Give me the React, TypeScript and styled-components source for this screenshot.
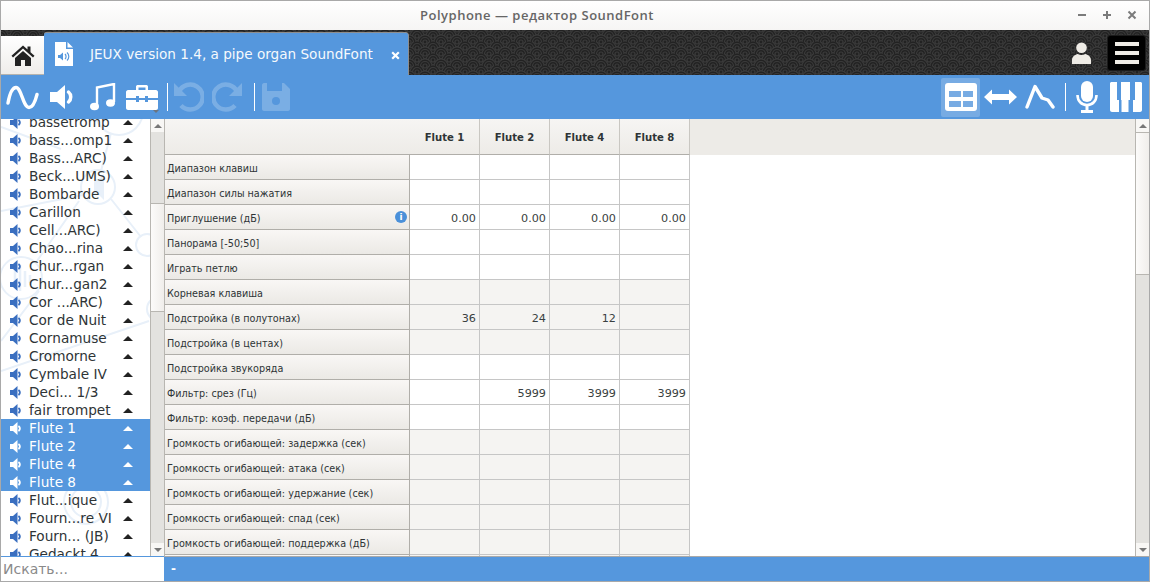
import React from "react"
import styled, { createGlobalStyle } from "styled-components"

const BLUE = "#5597dd"

const presets = [
  "bassetromp", "bass...omp1", "Bass...ARC)", "Beck...UMS)", "Bombarde", "Carillon",
  "Cell...ARC)", "Chao...rina", "Chur...rgan", "Chur...gan2", "Cor ...ARC)", "Cor de Nuit",
  "Cornamuse", "Cromorne", "Cymbale IV", "Deci... 1/3", "fair trompet", "Flute 1",
  "Flute 2", "Flute 4", "Flute 8", "Flut...ique", "Fourn...re VI", "Fourn... (JB)", "Gedackt 4",
]

const selected = ["Flute 1", "Flute 2", "Flute 4", "Flute 8"]

const columns = ["Flute 1", "Flute 2", "Flute 4", "Flute 8"]

type Row = { label: string; shaded?: boolean; info?: boolean; values?: string[] }

const rows: Row[] = [
  { label: "Диапазон клавиш" },
  { label: "Диапазон силы нажатия" },
  { label: "Приглушение (дБ)", info: true, values: ["0.00", "0.00", "0.00", "0.00"] },
  { label: "Панорама [-50;50]" },
  { label: "Играть петлю" },
  { label: "Корневая клавиша", shaded: true },
  { label: "Подстройка (в полутонах)", shaded: true, values: ["36", "24", "12", ""] },
  { label: "Подстройка (в центах)", shaded: true },
  { label: "Подстройка звукоряда" },
  { label: "Фильтр: срез (Гц)", values: ["", "5999", "3999", "3999"] },
  { label: "Фильтр: коэф. передачи (дБ)" },
  { label: "Громкость огибающей: задержка (сек)", shaded: true },
  { label: "Громкость огибающей: атака (сек)", shaded: true },
  { label: "Громкость огибающей: удержание (сек)", shaded: true },
  { label: "Громкость огибающей: спад (сек)", shaded: true },
  { label: "Громкость огибающей: поддержка (дБ)", shaded: true },
  { label: "", shaded: true },
]

const Global = createGlobalStyle`
  html, body {
    margin: 0;
    padding: 0;
    height: 100%;
    overflow: hidden;
    background: #fff;
  }
  #root {
    height: 100%;
  }
`

const Window = styled.div`
  width: 1150px;
  height: 582px;
  box-sizing: border-box;
  border: 1px solid #a9a9a9;
  display: flex;
  flex-direction: column;
  font-family: "DejaVu Sans", sans-serif;
  overflow: hidden;
`

const TitleBar = styled.div`
  height: 29px;
  flex: none;
  position: relative;
  display: flex;
  align-items: center;
  justify-content: center;
  background: linear-gradient(#ffffff, #f6f5f4);
  font-family: "Open Sans", sans-serif;
  font-weight: 600;
  font-size: 13px;
  letter-spacing: 0.5px;
  color: #666;
  padding: 0 76px 2px 0;
  box-sizing: border-box;
`

const WindowButtons = styled.div`
  position: absolute;
  right: 12px;
  top: 7px;
  display: flex;
  gap: 15px;
`

const TabBand = styled.div`
  height: 45px;
  flex: none;
  position: relative;
  background: #222;
  display: flex;
  align-items: flex-end;
`

const BandPattern = styled.svg`
  position: absolute;
  inset: 0;
  width: 100%;
  height: 100%;
`

const HomeTab = styled.div`
  position: relative;
  width: 43px;
  height: 39px;
  background: linear-gradient(#fff, #efedea);
  border-bottom: 1px solid #b5b3ae;
  box-sizing: border-box;
  display: flex;
  align-items: center;
  justify-content: center;
`

const ActiveTab = styled.div`
  position: relative;
  width: 364px;
  height: 42px;
  background: ${BLUE};
  border-radius: 2px 2px 0 0;
  box-shadow: 1px 0 0 #8d8d8d, 0 -1px 0 #8d8d8d;
  display: flex;
  align-items: center;
  color: #fff;
  font-size: 13.6px;
  padding-left: 11px;
  box-sizing: border-box;
`

const TabTitle = styled.span`
  margin-left: 17px;
  white-space: nowrap;
  opacity: 0.95;
`

const TabClose = styled.svg`
  position: absolute;
  right: 8px;
  top: 18px;
`

const BandRight = styled.div`
  position: absolute;
  right: 3px;
  top: 5px;
  display: flex;
  align-items: center;
  gap: 16px;
`

const MenuButton = styled.div`
  width: 39px;
  height: 36px;
  box-sizing: border-box;
  background: #000;
  border: 1px solid #1b1b1b;
  border-radius: 3px;
  box-shadow: inset 0 0 0 1px #000;
  display: flex;
  flex-direction: column;
  justify-content: center;
  align-items: center;
  gap: 5px;
`

const MenuLine = styled.span`
  display: block;
  width: 24px;
  height: 4px;
  background: #efece6;
`

const Toolbar = styled.div`
  height: 44px;
  flex: none;
  background: ${BLUE};
  display: flex;
  align-items: center;
  padding-left: 4px;
`

const ToolGroup = styled.div`
  display: flex;
  align-items: center;
`

const ToolIcon = styled.div<{ $w: number; $dim?: boolean; $active?: boolean }>`
  position: relative;
  width: ${(p) => p.$w}px;
  height: 39px;
  display: flex;
  align-items: center;
  justify-content: center;
  background: ${(p) => (p.$active ? "rgba(255,255,255,0.2)" : "transparent")};
  border-radius: 2px;
  & > svg {
    opacity: ${(p) => (p.$dim ? 0.22 : 1)};
  }
`

const MenuHint = styled.span`
  position: absolute;
  right: 5px;
  bottom: 4px;
  width: 0;
  height: 0;
  border-left: 3px solid transparent;
  border-right: 3px solid transparent;
  border-top: 3px solid #6b7480;
`

const ToolSep = styled.div<{ $gap: number }>`
  width: 1px;
  height: 28px;
  background: #fff;
  margin: 0 ${(p) => p.$gap}px;
`

const Spacer = styled.div`
  flex: 1;
`

const Main = styled.div`
  flex: 1;
  min-height: 0;
  display: flex;
`

const Sidebar = styled.div`
  width: 149px;
  flex: none;
  position: relative;
  overflow: hidden;
  background: #fff;
`

const Watermark = styled.svg`
  position: absolute;
  left: 0;
  top: 0;
`

const PresetList = styled.ul`
  list-style: none;
  position: relative;
  margin: -6px 0 0;
  padding: 0;
`

const Preset = styled.li<{ $selected: boolean }>`
  height: 18px;
  display: flex;
  align-items: center;
  padding-left: 8px;
  font-size: 13.65px;
  color: ${(p) => (p.$selected ? "#fff" : "#2e3436")};
  background: ${(p) => (p.$selected ? BLUE : "transparent")};
`

const PresetName = styled.span`
  flex: 1;
  margin-left: 7px;
  white-space: nowrap;
`

const Caret = styled.span<{ $light: boolean }>`
  width: 0;
  height: 0;
  margin-right: 17px;
  border-left: 5px solid transparent;
  border-right: 5px solid transparent;
  border-bottom: 5px solid ${(p) => (p.$light ? "#fff" : "#222")};
`

const Scrollbar = styled.div`
  flex: none;
  width: 14px;
  box-sizing: border-box;
  display: flex;
  flex-direction: column;
  background: #e3e2df;
  border-left: 1px solid #b8b6b1;
`

const ScrollEnd = styled.div<{ $down?: boolean }>`
  height: 13px;
  flex: none;
  background: #f8f7f5;
  display: flex;
  align-items: center;
  justify-content: center;
  &::after {
    content: "";
    width: 0;
    height: 0;
    border-left: 4px solid transparent;
    border-right: 4px solid transparent;
    ${(p) => (p.$down ? "border-top" : "border-bottom")}: 4px solid #777;
  }
`

const ScrollThumb = styled.div<{ $h: number; $offset?: number }>`
  height: ${(p) => p.$h}px;
  margin-top: ${(p) => p.$offset ?? 0}px;
  flex: none;
  box-sizing: border-box;
  background: linear-gradient(90deg, #fcfbfa, #f0eeeb);
  border-top: 1px solid #b8b6b1;
  border-bottom: 1px solid #b8b6b1;
`

const ScrollFill = styled.div`
  flex: 1;
`

const TableArea = styled.div`
  flex: 1;
  min-width: 0;
  overflow: hidden;
  background: #fff;
  border-left: 1px solid #b8b6b1;
`

const HeaderRow = styled.div`
  height: 36px;
  display: flex;
  background: linear-gradient(#f6f5f3, #edebe7);
`

const Corner = styled.div`
  width: 245px;
  box-sizing: border-box;
  border-bottom: 1px solid #b0aea9;
`

const ColHead = styled.div`
  width: 70px;
  box-sizing: border-box;
  border-right: 1px solid #c9c7c2;
  border-bottom: 1px solid #b0aea9;
  display: flex;
  align-items: center;
  justify-content: center;
  font-size: 10.1px;
  font-weight: bold;
  color: #2e3436;
  padding-top: 1px;
`

const HeaderRest = styled.div`
  flex: 1;
  background: #edebe7;
`

const TableRow = styled.div`
  height: 25px;
  display: flex;
`

const RowHead = styled.div`
  width: 245px;
  box-sizing: border-box;
  background: linear-gradient(#f9f7f5, #ebe9e5);
  border-right: 1px solid #b0aea9;
  border-bottom: 1px solid #b0aea9;
  display: flex;
  align-items: center;
  justify-content: space-between;
  padding: 2px 2px 0 2px;
  font-size: 9.65px;
  color: #2e3436;
`

const InfoDot = styled.span`
  width: 12px;
  height: 12px;
  border-radius: 50%;
  background: #4a90d9;
  color: #fff;
  font-size: 9px;
  font-weight: bold;
  line-height: 12px;
  text-align: center;
  margin-bottom: 3px;
`

const Cell = styled.div<{ $shaded?: boolean }>`
  width: 70px;
  box-sizing: border-box;
  background: ${(p) => (p.$shaded ? "#f5f4f2" : "#fff")};
  border-right: 1px solid #c6c6c6;
  border-bottom: 1px solid #c6c6c6;
  display: flex;
  align-items: center;
  justify-content: flex-end;
  padding: 2px 3px 0 0;
  font-size: 11.2px;
  color: #3a3f41;
`

const BottomBar = styled.div`
  height: 24px;
  flex: none;
  display: flex;
  border-top: 1px solid ${BLUE};
`

const Search = styled.div`
  width: 163px;
  flex: none;
  background: #fff;
  display: flex;
  align-items: center;
  padding-left: 2px;
  box-sizing: border-box;
  font-size: 14px;
  color: #8a8a8a;
`

const Status = styled.div`
  flex: 1;
  background: ${BLUE};
  box-shadow: 0 -1px 0 #a9a9a9;
  color: #fff;
  font-size: 12px;
  font-weight: bold;
  display: flex;
  align-items: center;
  padding-left: 7px;
`

const Speaker = ({ color }: { color: string }) => (
  <svg width="13" height="13" viewBox="0 0 13 13">
    <path d="M1 4h3l4.500-4v13L4 9H1z" fill={color} />
    <path d="M10 4.500c1.200 1.200 1.200 2.800 0 4" fill="none" stroke={color} strokeWidth="1.800" strokeLinecap="round" />
  </svg>
)

const App = () => {
  return (
    <Window>
      <Global />
      <TitleBar>
        Polyphone — редактор SoundFont
        <WindowButtons>
          <svg width="10" height="14" viewBox="0 0 10 14">
            <rect x="1" y="6" width="8" height="2" fill="#7b7b7b" />
          </svg>
          <svg width="10" height="14" viewBox="0 0 10 14">
            <path d="M1 7h8M5 3v8" stroke="#7b7b7b" strokeWidth="2" />
          </svg>
          <svg width="10" height="14" viewBox="0 0 10 14">
            <path d="M1.500 3.500l7 7M8.500 3.500l-7 7" stroke="#7b7b7b" strokeWidth="2" />
          </svg>
        </WindowButtons>
      </TitleBar>
      <TabBand>
        <BandPattern>
          <defs>
            <pattern id="scales" width="16" height="12" patternUnits="userSpaceOnUse">
              <g fill="#222" stroke="#3a3a3a" strokeWidth="1.200">
                <circle cx="0" cy="-6" r="7" />
                <circle cx="16" cy="-6" r="7" />
                <circle cx="8" cy="0" r="7" />
                <circle cx="8" cy="0" r="4.500" />
                <circle cx="8" cy="0" r="2" />
                <circle cx="0" cy="6" r="7" />
                <circle cx="0" cy="6" r="4.500" />
                <circle cx="0" cy="6" r="2" />
                <circle cx="16" cy="6" r="7" />
                <circle cx="16" cy="6" r="4.500" />
                <circle cx="16" cy="6" r="2" />
                <circle cx="8" cy="12" r="7" />
                <circle cx="8" cy="12" r="4.500" />
                <circle cx="8" cy="12" r="2" />
              </g>
            </pattern>
          </defs>
          <rect width="100%" height="100%" fill="url(#scales)" />
        </BandPattern>
        <HomeTab>
          <svg width="24" height="21" viewBox="0 0 24 21">
            <path d="M12 0.500L0.500 10.800l1.500 1.600L12 3.600l10 8.800 1.500-1.600-4-3.600V1.500h-3v3z" fill="#222" />
            <path d="M4 13l8-7 8 7v8h-6v-6h-4v6H4z" fill="#222" />
          </svg>
        </HomeTab>
        <ActiveTab>
          <svg width="18" height="24" viewBox="0 0 18 24">
            <path d="M0 0h11v7h7v17H0z" fill="#fff" />
            <path d="M12.500 0l5.500 5.500h-5.500z" fill="#fff" />
            <path d="M3 13h2l3-2.500v8L5 16H3z" fill={BLUE} />
            <path d="M10 12c1.400 1.300 1.400 3.700 0 5M12 10.500c2.400 2.200 2.400 5.800 0 8" fill="none" stroke={BLUE} strokeWidth="1.200" />
          </svg>
          <TabTitle>JEUX version 1.4, a pipe organ SoundFont</TabTitle>
          <TabClose width="9" height="9" viewBox="0 0 9 9">
            <path d="M1.200 1.200l6.600 6.600M7.800 1.200L1.200 7.800" stroke="#fff" strokeWidth="2.200" />
          </TabClose>
        </ActiveTab>
        <BandRight>
          <svg width="19" height="22" viewBox="0 0 20 23">
            <circle cx="10" cy="6" r="5.600" fill="#efece6" />
            <path d="M0 23v-4c0-4 3.500-6 6-6.500 2.400 1.400 5.600 1.400 8 0 2.500.5 6 2.500 6 6.500v4z" fill="#efece6" />
          </svg>
          <MenuButton>
            <MenuLine />
            <MenuLine />
            <MenuLine />
          </MenuButton>
        </BandRight>
      </TabBand>
      <Toolbar>
        <ToolGroup>
          <ToolIcon $w={34}>
            <svg width="33" height="27" viewBox="0 0 33 27">
              <path d="M2 19C4 8 7 3.500 10 3.500c5.500 0 7 20 13 20 3.500 0 6-5 8-13" fill="none" stroke="#fff" strokeWidth="3.400" strokeLinecap="round" />
            </svg>
          </ToolIcon>
          <ToolIcon $w={46}>
            <svg width="25" height="26" viewBox="0 0 25 26">
              <path d="M0 8h7l8-7v24l-8-7H0z" fill="#fff" />
              <path d="M18.500 8c3 2.500 3 7.500 0 10" fill="none" stroke="#fff" strokeWidth="3.500" strokeLinecap="round" />
            </svg>
          </ToolIcon>
          <ToolIcon $w={35}>
            <svg width="26" height="28" viewBox="0 0 26 28">
              <path d="M7 23V4.500L24 1v18" fill="none" stroke="#fff" strokeWidth="2.400" />
              <ellipse cx="4.500" cy="23.500" rx="4.500" ry="3.700" fill="#fff" />
              <ellipse cx="20.500" cy="20" rx="4.500" ry="3.700" fill="#fff" />
            </svg>
          </ToolIcon>
          <ToolIcon $w={44}>
            <svg width="32" height="26" viewBox="0 0 32 26">
              <path d="M10 6V2.500C10 1.500 11 1 12 1h8c1 0 2 .5 2 1.500V6h-2.500V3.500h-7V6z" fill="#fff" />
              <path d="M2 6h28c1 0 2 1 2 2v6H22v-2h-3v2h-6v-2h-3v2H0V8c0-1 1-2 2-2z" fill="#fff" />
              <path d="M0 16h10v2h3v-2h6v2h3v-2h10v8c0 1-1 2-2 2H2c-1 0-2-1-2-2z" fill="#fff" />
            </svg>
            <MenuHint />
          </ToolIcon>
          <ToolSep $gap={3} />
          <ToolIcon $w={33} $dim>
            <svg width="32" height="30" viewBox="0 0 32 30">
              <path d="M7 9.500a12.500 12.500 0 1 1 2 14" fill="none" stroke="#fff" strokeWidth="4.500" />
              <path d="M2 1v13h13z" fill="#fff" />
            </svg>
          </ToolIcon>
          <ToolIcon $w={47} $dim>
            <svg width="32" height="30" viewBox="0 0 32 30">
              <path d="M25 9.500a12.500 12.500 0 1 0-2 14" fill="none" stroke="#fff" strokeWidth="4.500" />
              <path d="M30 1v13H17z" fill="#fff" />
            </svg>
          </ToolIcon>
          <ToolSep $gap={3} />
          <ToolIcon $w={36} $dim>
            <svg width="28" height="28" viewBox="0 0 28 28">
              <path d="M2 0h20l6 6v20c0 1-1 2-2 2H2c-1 0-2-1-2-2V2C0 1 1 0 2 0z" fill="#fff" />
              <rect x="5" y="0" width="15" height="8" fill={BLUE} />
              <circle cx="14" cy="18" r="4" fill={BLUE} />
            </svg>
          </ToolIcon>
        </ToolGroup>
        <Spacer />
        <ToolGroup>
          <ToolIcon $w={39} $active>
            <svg width="32" height="28" viewBox="0 0 32 28">
              <path d="M3 0h26c2 0 3 1 3 3v22c0 2-1 3-3 3H3c-2 0-3-1-3-3V3c0-2 1-3 3-3zM4 8v6h12V8zm14 0v6h10V8zM4 18v6h12v-6zm14 0v6h10v-6z" fill="#fff" fillRule="evenodd" />
            </svg>
          </ToolIcon>
          <ToolIcon $w={40}>
            <svg width="33" height="16" viewBox="0 0 33 16">
              <path d="M0 8l8-7.500V5h17V.5L33 8l-8 7.500V11H8v4.500z" fill="#fff" />
            </svg>
          </ToolIcon>
          <ToolIcon $w={40}>
            <svg width="30" height="28" viewBox="0 0 30 28">
              <path d="M2 24L10 3.500 17 15l6 2 5 7" fill="none" stroke="#fff" strokeWidth="3.400" strokeLinecap="round" strokeLinejoin="round" />
            </svg>
          </ToolIcon>
          <ToolSep $gap={5} />
          <ToolIcon $w={32}>
            <svg width="22" height="32" viewBox="0 0 22 32">
              <rect x="5" y="0" width="12" height="21" rx="6" fill="#fff" />
              <path d="M1.500 14c0 6 4 10 9.500 10s9.500-4 9.500-10" fill="none" stroke="#fff" strokeWidth="2.600" />
              <rect x="9.500" y="24" width="3" height="5" fill="#fff" />
              <rect x="5" y="29" width="12" height="3" fill="#fff" />
            </svg>
          </ToolIcon>
          <ToolIcon $w={46}>
            <svg width="32" height="31" viewBox="0 0 32 31">
              <path d="M1 0h6v18h2v12H2c-1 0-2-1-2-2V1z" fill="#fff" />
              <path d="M11 0h1v0h8v18h-1.500v12h-7V18H11z" fill="#fff" />
              <path d="M25 0h6l1 1v27c0 1-1 2-2 2h-7V18h2z" fill="#fff" />
            </svg>
          </ToolIcon>
        </ToolGroup>
      </Toolbar>
      <Main>
        <Sidebar>
          <Watermark width="149" height="438" viewBox="0 0 149 438">
            <g fill="none" stroke="#e8f0f9" strokeWidth="2">
              <circle cx="118" cy="-8" r="24" />
              <circle cx="97" cy="68" r="17" />
              <circle cx="20" cy="159" r="21" />
              <circle cx="146" cy="126" r="11" />
              <circle cx="158" cy="190" r="12" />
              <circle cx="85" cy="383" r="22" />
              <circle cx="85" cy="383" r="15" />
              <path d="M110 14l-10 38M0 92l82-16M110 80l30 38M0 222l38-50M78 82L36 142M0 252l148-50M85 361V300M60 30L0 8" />
            </g>
            <path d="M93 60h5l5-5v26l-5-5h-5z" fill="#e8f0f9" />
            <path d="M14 150v18M19 146v26M24 152v16M29 156v8" stroke="#e8f0f9" strokeWidth="2.500" />
          </Watermark>
          <PresetList>
            {presets.map((name) => {
              const isSelected = selected.includes(name)
              return (
                <Preset key={name} $selected={isSelected}>
                  <Speaker color={isSelected ? "#fff" : "#3a6fc0"} />
                  <PresetName>{name}</PresetName>
                  <Caret $light={isSelected} />
                </Preset>
              )
            })}
          </PresetList>
        </Sidebar>
        <Scrollbar>
          <ScrollEnd />
          <ScrollThumb $h={109} $offset={71} />
          <ScrollFill />
          <ScrollEnd $down />
        </Scrollbar>
        <TableArea>
          <HeaderRow>
            <Corner />
            {columns.map((c) => (
              <ColHead key={c}>{c}</ColHead>
            ))}
            <HeaderRest />
          </HeaderRow>
          {rows.map((row, i) => (
            <TableRow key={i}>
              <RowHead>
                {row.label}
                {row.info && <InfoDot>i</InfoDot>}
              </RowHead>
              {columns.map((c, j) => (
                <Cell key={c} $shaded={row.shaded}>
                  {row.values ? row.values[j] : ""}
                </Cell>
              ))}
            </TableRow>
          ))}
        </TableArea>
        <Scrollbar>
          <ScrollEnd />
          <ScrollThumb $h={143} />
          <ScrollFill />
          <ScrollEnd $down />
        </Scrollbar>
      </Main>
      <BottomBar>
        <Search>Искать...</Search>
        <Status>-</Status>
      </BottomBar>
    </Window>
  )
}

export default App
